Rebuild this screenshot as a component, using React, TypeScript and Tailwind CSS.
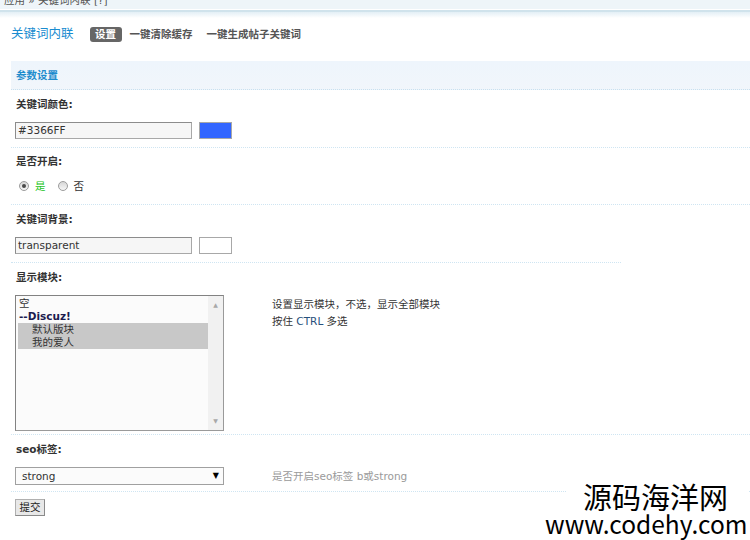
import React from "react";

// Radio dot in the old admin style
function Radio({ checked }: { checked?: boolean }) {
  return (
    <span className="flex h-[10px] w-[10px] items-center justify-center rounded-full border border-[#9c9c9c] bg-linear-to-b from-[#d6d6d6] to-[#f7f7f7]">
      {checked && <span className="h-[4px] w-[4px] rounded-full bg-[#4a4a4a]" />}
    </span>
  );
}

const inputCls =
  "h-[17px] w-[177px] border border-[#a8a8a8] border-t-[#8c8c8c] border-l-[#8c8c8c] bg-[#f6f6f6] pl-[2px] leading-[15px] text-[#333]";

export default function App() {
  return (
    <div className="relative h-[540px] w-[750px] overflow-hidden bg-white font-['DejaVu_Sans','Noto_Sans_CJK_SC',sans-serif] text-[10.5px] leading-[16px] text-[#333]">
      {/* breadcrumb band, cut off at the top */}
      <div className="h-[10px] overflow-hidden border-b border-white bg-[#eef5f9]">
        <div className="-mt-[7px] pl-[4px] leading-[14px] text-[#555]">应用 » 关键词内联 [?]</div>
      </div>
      <div className="h-[2px] bg-[#d0e3ec]" />
      <div className="h-[6px] bg-linear-to-b from-[#e3eff6] to-white" />

      {/* title row */}
      <div className="mt-[1px] flex h-[30px] items-center pl-[11px]">
        <span className="mr-[16px] text-[12.5px] text-[#1a8cd0]">关键词内联</span>
        <span className="h-[15px] rounded-[3px] bg-[#666] px-[5.5px] font-bold leading-[15px] text-white">设置</span>
        <span className="ml-[8px] font-bold text-[#555]">一键清除缓存</span>
        <span className="ml-[14px] font-bold text-[#555]">一键生成帖子关键词</span>
      </div>

      {/* section header */}
      <div className="mt-[12px] ml-[11px] flex h-[29px] items-center border-b border-dotted border-[#c8e0ee] bg-linear-to-b from-[#eef5fc] to-[#f1f6fb] pl-[5px] font-bold text-[#1e8ccd]">
        参数设置
      </div>

      <div className="ml-[11px]">
        {/* keyword colour */}
        <div className="border-b border-dotted border-[#cfe5f2] pl-[5px]">
          <div className="pt-[6px] font-bold">关键词颜色:</div>
          <div className="flex items-center pt-[10px] pb-[8px] -ml-[1px]">
            <div className={inputCls}>#3366FF</div>
            <div className="ml-[7px] h-[17px] w-[33px] border border-[#a8a8a8] bg-[#3366ff]" />
          </div>
        </div>

        {/* enabled */}
        <div className="border-b border-dotted border-[#cfe5f2] pl-[5px]">
          <div className="pt-[5px] font-bold">是否开启:</div>
          <div className="flex h-[16px] items-center mt-[9px] mb-[10px] pl-[3px]">
            <Radio checked />
            <span className="ml-[6px] text-[#22c422]">是</span>
            <span className="ml-[12px]">
              <Radio />
            </span>
            <span className="ml-[6px]">否</span>
          </div>
        </div>

        {/* keyword background */}
        <div className="w-[610px] border-b border-dotted border-[#cfe5f2] pl-[5px]">
          <div className="pt-[6px] font-bold">关键词背景:</div>
          <div className="flex items-center pt-[10px] pb-[8px] -ml-[1px]">
            <div className={inputCls}>transparent</div>
            <div className="ml-[7px] h-[17px] w-[33px] border border-[#a8a8a8] bg-white" />
          </div>
        </div>

        {/* modules */}
        <div className="border-b border-dotted border-[#cfe5f2] pl-[5px]">
          <div className="pt-[6px] font-bold">显示模块:</div>
          <div className="flex pt-[10px] pb-[3px] -ml-[1px]">
            <div className="flex h-[136px] w-[209px] border border-[#9a9a9a] border-t-[#828282] border-l-[#828282] bg-[#fbfbfb]">
              <div className="flex-1 pt-[1px] pl-[2px] leading-[13px]">
                <div className="pl-[1px]">空</div>
                <div className="pl-[1px] font-bold text-[#1c1c4e]">--Discuz!</div>
                <div className="bg-[#c8c8c8] pl-[14px]">默认版块</div>
                <div className="bg-[#c8c8c8] pl-[14px]">我的爱人</div>
              </div>
              <div className="flex w-[15px] flex-col items-center justify-between bg-[#f1f1f1] py-[6px] text-[6px] leading-[6px] text-[#a8a8a8]">
                <span>▲</span>
                <span>▼</span>
              </div>
            </div>
            <div className="ml-[48px] pt-[1px] leading-[17px]">
              <div>设置显示模块，不选，显示全部模块</div>
              <div>
                按住 <span className="text-[#27507c]">CTRL</span> 多选
              </div>
            </div>
          </div>
        </div>

        {/* seo tag */}
        <div className="border-b border-dotted border-[#cfe5f2] pl-[5px]">
          <div className="pt-[6px] font-bold">seo标签:</div>
          <div className="flex items-center pt-[10px] pb-[6px] -ml-[1px]">
            <div className="flex h-[18px] w-[209px] items-center justify-between border border-[#a0a0a0] bg-[#fbfbfb] pl-[6px] pr-[4px]">
              <span>strong</span>
              <span className="text-[8px] text-black">▼</span>
            </div>
            <div className="ml-[48px] text-[#9a9a9a]">是否开启seo标签 b或strong</div>
          </div>
        </div>

        <div className="pt-[7px] pl-[4px]">
          <button className="flex h-[17px] w-[30px] items-center justify-center border border-[#8a8a8a] border-t-[#b0b0b0] border-l-[#b0b0b0] bg-[#e8e8e8] text-[10.5px] leading-[15px] text-[#222]">
            提交
          </button>
        </div>
      </div>

      {/* watermark */}
      <div className="absolute left-[545px] top-[482px] font-['Noto_Sans_CJK_SC',sans-serif] text-black">
        <div className="ml-[22px] bg-white pl-[16px] text-[29px] leading-[29px]">源码海洋网</div>
        <div className="bg-white text-[24.5px] leading-[25px]">www.codehy.com</div>
      </div>
    </div>
  );
}
